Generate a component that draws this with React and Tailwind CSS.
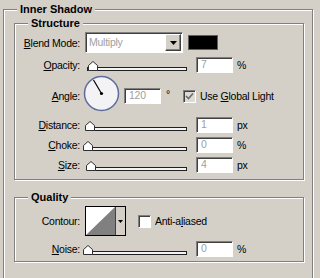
import React from "react";

const sunken =
  "border border-t-[#808080] border-l-[#808080] border-b-white border-r-white shadow-[inset_1px_1px_0_#404040]";

function Input({ value, className = "" }) {
  return (
    <div
      className={`w-[37px] h-[16px] bg-white ${sunken} text-[#a0a0a0] pl-[4px] leading-[13px] ${className}`}
    >
      {value}
    </div>
  );
}

function Thumb() {
  return (
    <svg width="10" height="10" viewBox="0 0 10 10">
      <path d="M0.5 9.5 L0.5 4.5 L5 0.5 L9.5 4.5 L9.5 9.5 Z" fill="#ffffff" stroke="#303030" strokeWidth="1" />
    </svg>
  );
}

function Slider({ pos }) {
  return (
    <div className="relative w-[104px] h-[16px] ml-[3px]">
      <div className="ml-[4px] w-[100px] h-[4px] mt-[10px] border border-[#202020] bg-[#f4f4f4]" />
      <div className="absolute top-[4px]" style={{ left: pos }}>
        <Thumb />
      </div>
    </div>
  );
}

function Label({ children, className = "" }) {
  return <div className={`w-[65px] text-right leading-[16px] ${className}`}>{children}</div>;
}

function U({ children }) {
  return <span className="underline underline-offset-[1px]">{children}</span>;
}

function SliderRow({ label, value, unit, pos, className = "" }) {
  return (
    <div className={`flex items-center h-[16px] ${className}`}>
      <Label>{label}</Label>
      <Slider pos={pos} />
      <Input value={value} className="ml-[9px]" />
      <div className="ml-[4px] leading-[16px]">{unit}</div>
    </div>
  );
}

function Checkbox({ checked, gray }) {
  return (
    <div className={`w-[13px] h-[13px] ${sunken} ${gray ? "bg-[#dedbd5]" : "bg-white"} flex items-center justify-center`}>
      {checked && (
        <svg width="9" height="9" viewBox="0 0 9 9">
          <path d="M1 4 L3.5 6.5 L8 1.5" fill="none" stroke="#6a6a6a" strokeWidth="1.6" />
        </svg>
      )}
    </div>
  );
}

function Legend({ children }) {
  return (
    <div className="absolute -top-[7px] left-[13px] px-[3px] bg-[#d4d0c8] font-bold text-[11px] tracking-normal leading-[12px]">
      {children}
    </div>
  );
}

const etched = "border border-[#808080] shadow-[inset_1px_1px_0_#fff,1px_1px_0_#fff]";

export default function App() {
  return (
    <div className="w-[320px] h-[278px] overflow-hidden bg-[#d4d0c8] pt-[9px] pl-[3px] font-['Liberation_Sans',Arial,sans-serif] text-[10.5px] tracking-[-0.25px] text-black">
      <div className={`relative w-[310px] h-[290px] ${etched}`}>
        <Legend>Inner Shadow</Legend>

        {/* Structure */}
        <div className={`relative ml-[10px] mt-[13px] w-[290px] ${etched} pt-[8px] pb-[6px]`}>
          <Legend>Structure</Legend>

          <div className="flex items-center h-[21px]">
            <Label><U>B</U>lend Mode:</Label>
            <div className={`ml-[5px] w-[98px] h-[21px] bg-white ${sunken} flex items-stretch`}>
              <div className="flex-1 pl-[3px] text-[#a0a0a0] leading-[18px]">Multiply</div>
              <div className="w-[16px] m-[1px] border border-t-white border-l-white border-b-[#404040] border-r-[#404040] shadow-[inset_-1px_-1px_0_#808080] bg-[#d4d0c8] flex items-center justify-center">
                <svg width="7" height="4" viewBox="0 0 7 4">
                  <path d="M0 0 L7 0 L3.5 4 Z" fill="#000" />
                </svg>
              </div>
            </div>
            <div className="ml-[5px] w-[30px] h-[15px] bg-black border border-[#606060]" />
          </div>

          <SliderRow className="mt-[4px]" label={<><U>O</U>pacity:</>} value="7" unit="%" pos={5} />

          <div className="flex items-start h-[38px] mt-[2px]">
            <Label className="mt-[13px]"><U>A</U>ngle:</Label>
            <svg className="ml-[3px]" width="37" height="37" viewBox="0 0 37 37">
              <circle cx="18.5" cy="18.5" r="17" fill="#f3f3f5" stroke="#5d6c9c" strokeWidth="1.5" />
              <line x1="18.5" y1="18.5" x2="10.5" y2="5" stroke="#000" strokeWidth="1.2" />
              <circle cx="18.5" cy="18.5" r="1.6" fill="#000" />
            </svg>
            <Input value="120" className="ml-[4px] mt-[13px]" />
            <div className="w-[22px] pl-[5px] mt-[11px] leading-[16px]">°</div>
            <div className="mt-[15px]">
              <Checkbox checked gray />
            </div>
            <div className="ml-[4px] mt-[13px] leading-[16px]">
              Use <U>G</U>lobal Light
            </div>
          </div>

          <SliderRow className="mt-[4px]" label={<><U>D</U>istance:</>} value="1" unit="px" pos={2} />
          <SliderRow className="mt-[4px]" label={<><U>C</U>hoke:</>} value="0" unit="%" pos={0} />
          <SliderRow className="mt-[4px]" label={<><U>S</U>ize:</>} value="4" unit="px" pos={3} />
        </div>

        {/* Quality */}
        <div className={`relative ml-[10px] mt-[17px] w-[290px] ${etched} pt-[8px] pb-[4px]`}>
          <Legend>Quality</Legend>

          <div className="flex items-center h-[30px]">
            <Label>Contour:</Label>
            <div className="ml-[5px] w-[41px] h-[30px] border border-black flex">
              <svg width="29" height="28" viewBox="0 0 29 28">
                <rect x="0" y="0" width="29" height="28" fill="#ffffff" />
                <path d="M0 28 L29 0 L29 28 Z" fill="#808080" />
              </svg>
              <div className="flex-1 border-l border-[#404040] bg-[#d4d0c8] flex items-center justify-center">
                <svg width="5" height="3" viewBox="0 0 5 3">
                  <path d="M0 0 L5 0 L2.5 3 Z" fill="#000" />
                </svg>
              </div>
            </div>
            <div className="ml-[12px]">
              <Checkbox />
            </div>
            <div className="ml-[4px] leading-[16px]">
              Anti-a<U>l</U>iased
            </div>
          </div>

          <SliderRow className="mt-[5px]" label={<><U>N</U>oise:</>} value="0" unit="%" pos={0} />
        </div>
      </div>
    </div>
  );
}
